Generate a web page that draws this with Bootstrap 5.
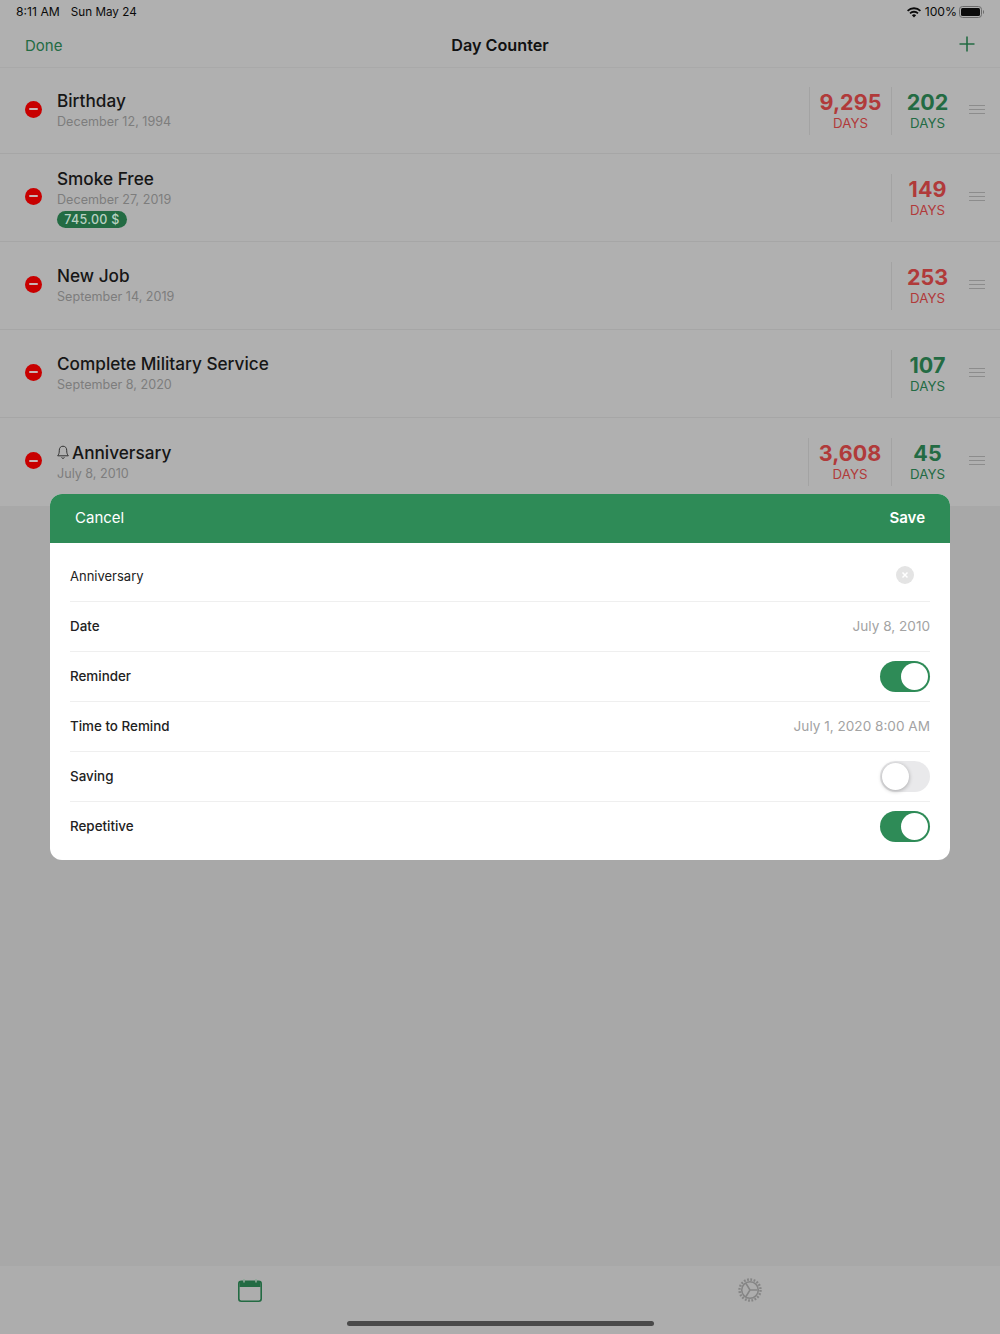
<!DOCTYPE html>
<html lang="en">
<head>
  <meta charset="UTF-8" />
  <title>Day Counter</title>
  <link href="https://cdn.jsdelivr.net/npm/bootstrap@5.3.3/dist/css/bootstrap.min.css" rel="stylesheet" />
  <script src="https://cdn.jsdelivr.net/npm/bootstrap@5.3.3/dist/js/bootstrap.bundle.min.js"></script>
  <style>
    body {
      margin: 0;
      background: #a8a8a8;
      font-family: Inter, "Liberation Sans", sans-serif;
      color: #111;
    }
    .screen { width: 1000px; height: 1334px; position: relative; overflow: hidden; }
    .top-area { background: #b0b0b0; }
    .status-bar { height: 24px; padding: 0 15px 0 16px; font-size: 12.2px; line-height: 24px; color: #0a0a0a; }
    .status-date { font-size: 11.7px; margin-left: 3px; }
    .status-batt { margin-left: 2px; }
    .nav-bar { height: 44px; padding: 0 25px; border-bottom: 1px solid #a9a9a9; }
    .nav-side { flex: 1 1 0; }
    .nav-done { font-size: 15px; color: #236b43; line-height: 42px; }
    .nav-title { font-size: 16.2px; font-weight: 600; color: #111; }
    .day-row { padding-left: 25px; padding-right: 15px; border-bottom: 1px solid #a6a6a6; }
    .row-h86 { height: 86px; }
    .row-h88 { height: 88px; }
    .minus-dot {
      width: 17px; height: 17px; border-radius: 50%; background: #c80000; margin-right: 15px;
      flex: none; margin-bottom: 3px;
    }
    .minus-dot::after {
      content: ""; display: block; width: 9px; height: 2px; background: #c9b5b5;
      margin: 7.5px auto 0; border-radius: 1px;
    }
    .day-name { font-size: 17.2px; font-weight: 500; line-height: 22px; color: #161616; }
    .day-date { font-size: 12.6px; line-height: 18px; margin-top: 1px; color: #7d7d7d; }
    .saved-pill {
      display: block; width: 70px; text-align: center; background: #236b43; color: #b8d0c2; font-size: 12.5px; line-height: 17px;
      border-radius: 9px; margin-top: 2px; letter-spacing: .3px; font-weight: 500;
    }
    .bell-ico { margin-right: 3px; }
    .count-box { height: 48px; border-left: 1px solid #a3a3a3; text-align: center; flex: none; }
    .count-wide { width: 82px; }
    .count-wider { width: 83px; }
    .count-last { width: 72px; }
    .count-num { font-size: 21.5px; font-weight: 700; line-height: 25px; }
    .count-lbl { font-size: 13.3px; line-height: 17px; }
    .tone-red { color: #b03a3a; }
    .tone-green { color: #236b43; }
    .grip { width: 16px; margin-left: 6px; flex: none; margin-bottom: 3px; }
    .grip i { display: block; height: 1px; background: #8c8c8c; margin: 3px 0; }
    .gap-fill { flex-grow: 1; }
    .tab-bar { height: 68px; background: #adadad; position: relative; }
    .tab-cell { width: 50%; padding-top: 13px; text-align: center; line-height: 0; }
    .gear-ico { margin-top: -1px; }
    .home-bar { position: absolute; left: 347px; top: 55px; width: 307px; height: 5px; border-radius: 3px; background: #4a4a4a; }
    .sheet { position: absolute; left: 50px; top: 494px; width: 900px; height: 366px; background: #fff; border-radius: 12px; overflow: hidden; }
    .sheet-head { height: 49px; padding: 0 25px; background: #2e8b57; color: #fff; font-size: 15px; }
    .sheet-body { padding: 9px 20px 0; font-size: 13.4px; color: #222; }
    .sheet-line { height: 50px; border-bottom: 1px solid #efefef; padding-bottom: 1px; }
    .sheet-line:last-child { border-bottom-color: transparent; }
    .sheet-name { font-size: 13px; padding-top: 1px; }
    .sheet-val { color: #a3a3a3; font-size: 13.6px; }
    .clear-btn { width: 18px; height: 18px; border-radius: 50%; background: #e4e4e4; margin-right: 16px; margin-top: -2px; }
    .toggle-sw { width: 50px; height: 31px; border-radius: 16px; position: relative; flex: none; }
    .toggle-sw::after { content: ""; position: absolute; top: 2px; width: 27px; height: 27px; border-radius: 50%; background: #fff; }
    .toggle-sw.is-on { background: #2e8b57; }
    .toggle-sw.is-on::after { right: 2px; }
    .toggle-sw.is-off { background: #e9e9eb; }
    .toggle-sw.is-off::after { left: 2px; box-shadow: 0 1px 4px rgba(0,0,0,.3); }
  </style>
</head>
<body>
  <div class="screen d-flex flex-column">
    <div class="top-area">
      <div class="status-bar d-flex justify-content-between align-items-center">
        <div class="d-flex gap-2"><span>8:11 AM</span><span class="status-date">Sun May 24</span></div>
        <div class="d-flex align-items-center">
          <svg width="14" height="11" viewBox="0 0 14 11" class="me-1"><path d="M7 10.6 4.9 8.3a3 3 0 0 1 4.2 0zM3.6 7 2.4 5.7a6.6 6.6 0 0 1 9.2 0L10.4 7a4.9 4.9 0 0 0-6.8 0zM1.2 4.5 0 3.2a10 10 0 0 1 14 0l-1.2 1.3a8.3 8.3 0 0 0-11.6 0z" fill="#0a0a0a"/></svg>
          <span>100%</span>
          <svg width="26" height="12" viewBox="0 0 26 12" class="status-batt"><rect x=".5" y=".5" width="22" height="11" rx="3" fill="none" stroke="#6b6b6b"/><rect x="2" y="2" width="19" height="8" rx="1.5" fill="#0a0a0a"/><path d="M24 4v4a2 2 0 0 0 1-2 2 2 0 0 0-1-2z" fill="#6b6b6b"/></svg>
        </div>
      </div>
      <div class="nav-bar d-flex align-items-center">
        <div class="nav-side"><span class="nav-done">Done</span></div>
        <span class="nav-title">Day Counter</span>
        <div class="nav-side d-flex justify-content-end">
          <svg width="16" height="16" viewBox="0 0 16 16" style="margin-top:-4px"><path d="M8 .5v15M.5 8h15" stroke="#236b43" stroke-width="1.6" fill="none"/></svg>
        </div>
      </div>

      <div class="day-row row-h86 d-flex align-items-center">
        <div class="minus-dot"></div>
        <div class="gap-fill">
          <div class="day-name">Birthday</div>
          <div class="day-date">December 12, 1994</div>
        </div>
        <div class="count-box count-wide d-flex flex-column justify-content-center"><div class="count-num tone-red">9,295</div><div class="count-lbl tone-red">DAYS</div></div>
        <div class="count-box count-last d-flex flex-column justify-content-center"><div class="count-num tone-green">202</div><div class="count-lbl tone-green">DAYS</div></div>
        <div class="grip"><i></i><i></i><i></i></div>
      </div>

      <div class="day-row row-h88 d-flex align-items-center">
        <div class="minus-dot"></div>
        <div class="gap-fill">
          <div class="day-name">Smoke Free</div>
          <div class="day-date">December 27, 2019</div>
          <span class="saved-pill">745.00 $</span>
        </div>
        <div class="count-box count-last d-flex flex-column justify-content-center"><div class="count-num tone-red">149</div><div class="count-lbl tone-red">DAYS</div></div>
        <div class="grip"><i></i><i></i><i></i></div>
      </div>

      <div class="day-row row-h88 d-flex align-items-center">
        <div class="minus-dot"></div>
        <div class="gap-fill">
          <div class="day-name">New Job</div>
          <div class="day-date">September 14, 2019</div>
        </div>
        <div class="count-box count-last d-flex flex-column justify-content-center"><div class="count-num tone-red">253</div><div class="count-lbl tone-red">DAYS</div></div>
        <div class="grip"><i></i><i></i><i></i></div>
      </div>

      <div class="day-row row-h88 d-flex align-items-center">
        <div class="minus-dot"></div>
        <div class="gap-fill">
          <div class="day-name">Complete Military Service</div>
          <div class="day-date">September 8, 2020</div>
        </div>
        <div class="count-box count-last d-flex flex-column justify-content-center"><div class="count-num tone-green">107</div><div class="count-lbl tone-green">DAYS</div></div>
        <div class="grip"><i></i><i></i><i></i></div>
      </div>

      <div class="day-row row-h88 d-flex align-items-center border-0">
        <div class="minus-dot"></div>
        <div class="gap-fill">
          <div class="day-name d-flex align-items-center">
            <svg width="12" height="15" viewBox="0 0 12 15" class="bell-ico"><path d="M6 1.2c-2.4 0-3.7 1.8-3.7 4 0 3-.6 4.3-1.6 5.6h10.6c-1-1.3-1.6-2.6-1.6-5.6 0-2.2-1.3-4-3.7-4zM4.6 12.4a1.5 1.5 0 0 0 2.8 0" fill="none" stroke="#333" stroke-width="1"/></svg>
            <span>Anniversary</span>
          </div>
          <div class="day-date">July 8, 2010</div>
        </div>
        <div class="count-box count-wider d-flex flex-column justify-content-center"><div class="count-num tone-red">3,608</div><div class="count-lbl tone-red">DAYS</div></div>
        <div class="count-box count-last d-flex flex-column justify-content-center"><div class="count-num tone-green">45</div><div class="count-lbl tone-green">DAYS</div></div>
        <div class="grip"><i></i><i></i><i></i></div>
      </div>
    </div>

    <div class="gap-fill"></div>

    <div class="tab-bar d-flex">
      <div class="tab-cell">
        <svg width="24" height="23" viewBox="0 0 24 23"><rect x=".8" y="2.3" width="22.4" height="19.9" rx="2.5" fill="none" stroke="#236b43" stroke-width="1.6"/><path d="M1.5 2.500h21V8h-21z" fill="#236b43"/><path d="M6 0v3.500M18 0v3.500" stroke="#8fa99a" stroke-width="1.6"/></svg>
      </div>
      <div class="tab-cell">
        <svg width="24" height="24" viewBox="0 0 24 24" class="gear-ico"><circle cx="12" cy="12" r="8.3" fill="none" stroke="#858585" stroke-width="1.6"/><circle cx="12" cy="12" r="10.5" fill="none" stroke="#858585" stroke-width="2.4" stroke-dasharray="1.8 1.5"/><path d="M12 12 19.500 12M12 12 8 5.500M12 12 8 18.500" stroke="#858585" stroke-width="1.5" fill="none"/></svg>
      </div>
      <div class="home-bar"></div>
    </div>

    <div class="sheet">
      <div class="sheet-head d-flex justify-content-between align-items-center">
        <span>Cancel</span>
        <span class="fw-semibold">Save</span>
      </div>
      <div class="sheet-body">
        <div class="sheet-line d-flex justify-content-between align-items-center">
          <span class="sheet-name">Anniversary</span>
          <svg class="clear-btn" viewBox="0 0 18 18"><path d="M6.500 6.500l5 5M11.500 6.500l-5 5" stroke="#fff" stroke-width="1.5"/></svg>
        </div>
        <div class="sheet-line d-flex justify-content-between align-items-center">
          <span class="fw-medium">Date</span><span class="sheet-val">July 8, 2010</span>
        </div>
        <div class="sheet-line d-flex justify-content-between align-items-center">
          <span class="fw-medium">Reminder</span><div class="toggle-sw is-on"></div>
        </div>
        <div class="sheet-line d-flex justify-content-between align-items-center">
          <span class="fw-medium">Time to Remind</span><span class="sheet-val">July 1, 2020 8:00 AM</span>
        </div>
        <div class="sheet-line d-flex justify-content-between align-items-center">
          <span class="fw-medium">Saving</span><div class="toggle-sw is-off"></div>
        </div>
        <div class="sheet-line d-flex justify-content-between align-items-center">
          <span class="fw-medium">Repetitive</span><div class="toggle-sw is-on"></div>
        </div>
      </div>
    </div>
  </div>
</body>
</html>
